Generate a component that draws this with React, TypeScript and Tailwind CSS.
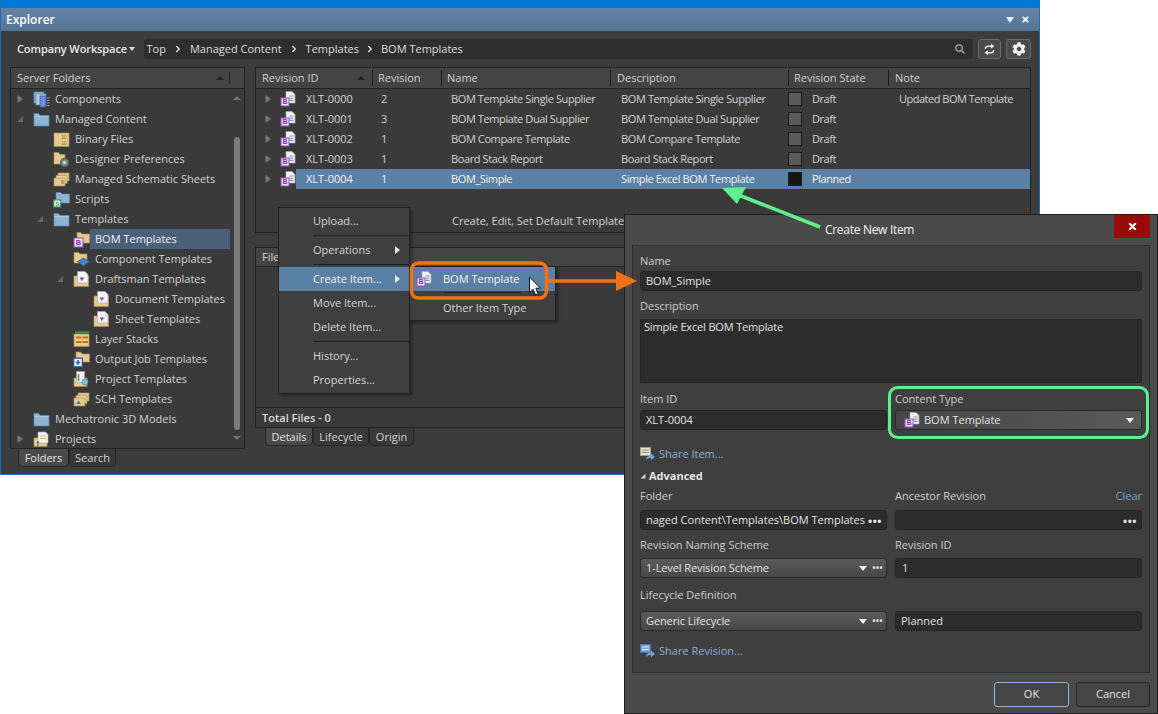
import { ChevronRight } from "lucide-react";
import { FaCog, FaSearch, FaTimes } from "react-icons/fa";

const FONT = "font-['Open_Sans','Liberation_Sans',sans-serif]";

function BomIcon({ className = "" }: { className?: string }) {
  return (
    <svg viewBox="0 0 16 16" className={`h-4 w-4 shrink-0 ${className}`}>
      <path d="M6 .5h6l3 3v8.500H6z" fill="#f2f2f5" stroke="#a8a8b4" strokeWidth=".7" />
      <path d="M9.500 5h4M9.500 7.200h4M9.500 9.400h4" stroke="#8a90a4" strokeWidth="1.100" />
      <rect x="1" y="7" width="8" height="8" fill="#efe6f7" stroke="#8f4fb8" strokeWidth="1" />
      <text x="5" y="13.400" textAnchor="middle" fontSize="7" fontWeight="700" fill="#7b2fa8" fontFamily="Liberation Sans">
        B
      </text>
    </svg>
  );
}

function FolderShape({ kind }: { kind: "blue" | "yellow" }) {
  const body = kind === "blue" ? "#8db4d4" : "#e5cc8e";
  const tab = kind === "blue" ? "#a9cbe4" : "#f1dfae";
  const line = kind === "blue" ? "#5d88ab" : "#a98f55";
  return (
    <>
      <path d="M1 2.500V15h15V4.500H7L5.500 2.500z" fill={body} stroke={line} strokeWidth=".7" />
      <path d="M1.500 5.500h14" stroke={tab} strokeWidth="1.200" />
    </>
  );
}

function TreeIcon({ name }: { name: string }) {
  const cls = "h-[17px] w-[17px] shrink-0";
  switch (name) {
    case "components":
      return (
        <svg viewBox="0 0 17 17" className={cls}>
          <path d="M1 1h10v11H1z" fill="#8db4d4" stroke="#5d88ab" strokeWidth=".7" />
          <path d="M3 3h10v11H3z" fill="#a9cbe4" stroke="#5d88ab" strokeWidth=".7" />
          <rect x="7" y="5" width="6" height="11" fill="#6d8fe0" stroke="#3553a8" strokeWidth=".7" />
          <path d="M14 7h2.500M14 9.500h2.500M14 12h2.500M14 14.500h2.500" stroke="#a9b9d0" strokeWidth=".8" />
        </svg>
      );
    case "blue":
      return (
        <svg viewBox="0 0 17 17" className={cls}>
          <FolderShape kind="blue" />
        </svg>
      );
    case "binary":
      return (
        <svg viewBox="0 0 17 17" className={cls}>
          <path d="M1 2h15v13.500H1z" fill="#e5cc8e" stroke="#a98f55" strokeWidth=".7" />
          <text x="11" y="8" textAnchor="middle" fontSize="5" fill="#8b6a2c" fontFamily="Liberation Sans">10</text>
          <text x="11" y="13.500" textAnchor="middle" fontSize="5" fill="#8b6a2c" fontFamily="Liberation Sans">10</text>
        </svg>
      );
    case "prefs":
      return (
        <svg viewBox="0 0 17 17" className={cls}>
          <path d="M1 1.500V13h11V3.500H7L5.500 1.500z" fill="#e5cc8e" stroke="#a98f55" strokeWidth=".7" />
          <circle cx="11.500" cy="11.500" r="4" fill="#7e878d" stroke="#59636a" strokeWidth="1.300" />
          <circle cx="11.500" cy="11.500" r="1.600" fill="#cfd6da" />
        </svg>
      );
    case "sheets":
      return (
        <svg viewBox="0 0 17 17" className={cls}>
          <path d="M5 2h11v8H5z" fill="#e5cc8e" stroke="#a98f55" strokeWidth=".7" />
          <path d="M3 4.500h11v8H3z" fill="#ead59e" stroke="#a98f55" strokeWidth=".7" />
          <path d="M1 7h11v8H1z" fill="#e5cc8e" stroke="#a98f55" strokeWidth=".7" />
          <path d="M8 10h3M8 12h3" stroke="#8b6a2c" strokeWidth=".8" />
        </svg>
      );
    case "scripts":
      return (
        <svg viewBox="0 0 17 17" className={cls}>
          <path d="M3 1.500V12h13.500V3H9L7.500 1.500z" fill="#8db4d4" stroke="#5d88ab" strokeWidth=".7" />
          <rect x=".7" y="9" width="7" height="7" fill="#f2f7f2" stroke="#2e8b57" strokeWidth="1.100" />
          <text x="4.200" y="14.700" textAnchor="middle" fontSize="6" fontWeight="700" fill="#2e8b57" fontFamily="Liberation Sans">S</text>
        </svg>
      );
    case "bom":
      return (
        <svg viewBox="0 0 17 17" className={cls}>
          <path d="M4 1.500V12h12.500V3H9L7.500 1.500z" fill="#e5cc8e" stroke="#a98f55" strokeWidth=".7" />
          <rect x="1" y="7" width="9" height="9" fill="#efe6f7" stroke="#8f4fb8" strokeWidth="1.100" />
          <text x="5.500" y="14.300" textAnchor="middle" fontSize="7.500" fontWeight="700" fill="#7b2fa8" fontFamily="Liberation Sans">B</text>
        </svg>
      );
    case "component":
      return (
        <svg viewBox="0 0 17 17" className={cls}>
          <path d="M1 1.500V12h13V3H7L5.500 1.500z" fill="#e5cc8e" stroke="#a98f55" strokeWidth=".7" />
          <path d="M10.500 7l6 3.500-6 4.500-6-4.500z" fill="#4f7fc4" stroke="#2d5493" strokeWidth=".7" />
        </svg>
      );
    case "draftsman":
      return (
        <svg viewBox="0 0 17 17" className={cls}>
          <path d="M1 5v10.500h14.500V5z" fill="#e5cc8e" stroke="#a98f55" strokeWidth=".7" />
          <path d="M4.500 .5H12l3 3V12H4.500z" fill="#f4f4f8" stroke="#a8a8b8" strokeWidth=".7" />
          <path d="M6.500 6.500h5l-2 2-.5 2-1-2z" fill="#7a3fb0" />
        </svg>
      );
    case "layers":
      return (
        <svg viewBox="0 0 17 17" className={cls}>
          <rect x="1" y="3" width="15" height="12.500" fill="#e5cc8e" stroke="#a98f55" strokeWidth=".7" />
          <path d="M2 1.500h14" stroke="#2f9a48" strokeWidth="2" />
          <path d="M3 6.500h5.500M9.500 6.500H15M3 11h5.500M9.500 11H15" stroke="#c96f1e" strokeWidth="2" />
        </svg>
      );
    case "output":
      return (
        <svg viewBox="0 0 17 17" className={cls}>
          <path d="M3 1V11h13.500V3H9L7.500 1z" fill="#e5cc8e" stroke="#a98f55" strokeWidth=".7" />
          <rect x=".7" y="7.200" width="8.600" height="8.600" fill="#f2f6fc" stroke="#25589f" strokeWidth="1.300" />
          <path d="M5 9v5M2.700 11.500h4.600" stroke="#25589f" strokeWidth="1.400" />
        </svg>
      );
    case "project":
      return (
        <svg viewBox="0 0 17 17" className={cls}>
          <path d="M1 7v8.500h13V7z" fill="#e5cc8e" stroke="#a98f55" strokeWidth=".7" />
          <path d="M3.500 .5h8v11h-8z" fill="#f2f2f6" stroke="#a0a0b0" strokeWidth=".7" />
          <path d="M5.500 3v7" stroke="#5a8f4f" strokeWidth="1.600" />
          <circle cx="12" cy="11" r="3" fill="#7fc7d8" stroke="#3f8ea0" strokeWidth=".8" />
        </svg>
      );
    case "sch":
      return (
        <svg viewBox="0 0 17 17" className={cls}>
          <path d="M5 2h11v8H5z" fill="#e5cc8e" stroke="#a98f55" strokeWidth=".7" />
          <path d="M3 4.500h11v8H3z" fill="#ead59e" stroke="#a98f55" strokeWidth=".7" />
          <path d="M1 7h11v8H1z" fill="#e5cc8e" stroke="#a98f55" strokeWidth=".7" />
          <path d="M3 13l2.500-3.500L8 13z" fill="#5a74c0" />
        </svg>
      );
    default:
      return (
        <svg viewBox="0 0 17 17" className={cls}>
          <path d="M1 7v8.500h13V7z" fill="#e5cc8e" stroke="#a98f55" strokeWidth=".7" />
          <path d="M5 1h7.500L15 3.500V12H5z" fill="#f4f4f8" stroke="#a8a8b8" strokeWidth=".7" />
          <path d="M7 5h6M7 7.500h6" stroke="#e0a92e" strokeWidth="1.200" />
          <text x="3.500" y="14.500" fontSize="7" fontWeight="700" fill="#3a62b0" fontFamily="Liberation Sans">f</text>
        </svg>
      );
  }
}

const tree = [
  { label: "Components", level: 0, arrow: "right", icon: "components" },
  { label: "Managed Content", level: 0, arrow: "down", icon: "blue" },
  { label: "Binary Files", level: 1, arrow: "", icon: "binary" },
  { label: "Designer Preferences", level: 1, arrow: "", icon: "prefs" },
  { label: "Managed Schematic Sheets", level: 1, arrow: "", icon: "sheets" },
  { label: "Scripts", level: 1, arrow: "", icon: "scripts" },
  { label: "Templates", level: 1, arrow: "down", icon: "blue" },
  { label: "BOM Templates", level: 2, arrow: "", icon: "bom", selected: true },
  { label: "Component Templates", level: 2, arrow: "", icon: "component" },
  { label: "Draftsman Templates", level: 2, arrow: "down", icon: "draftsman" },
  { label: "Document Templates", level: 3, arrow: "", icon: "draftsman" },
  { label: "Sheet Templates", level: 3, arrow: "", icon: "draftsman" },
  { label: "Layer Stacks", level: 2, arrow: "", icon: "layers" },
  { label: "Output Job Templates", level: 2, arrow: "", icon: "output" },
  { label: "Project Templates", level: 2, arrow: "", icon: "project" },
  { label: "SCH Templates", level: 2, arrow: "", icon: "sch" },
  { label: "Mechatronic 3D Models", level: 0, arrow: "", icon: "blue" },
  { label: "Projects", level: 0, arrow: "right", icon: "projects" },
];

const revisions = [
  { id: "XLT-0000", rev: "2", name: "BOM Template Single Supplier", desc: "BOM Template Single Supplier", state: "Draft", note: "Updated BOM Template" },
  { id: "XLT-0001", rev: "3", name: "BOM Template Dual Supplier", desc: "BOM Template Dual Supplier", state: "Draft", note: "" },
  { id: "XLT-0002", rev: "1", name: "BOM Compare Template", desc: "BOM Compare Template", state: "Draft", note: "" },
  { id: "XLT-0003", rev: "1", name: "Board Stack Report", desc: "Board Stack Report", state: "Draft", note: "" },
  { id: "XLT-0004", rev: "1", name: "BOM_Simple", desc: "Simple Excel BOM Template", state: "Planned", note: "", selected: true },
];

function Arrow({ dir }: { dir: string }) {
  if (dir === "right") {
    return (
      <svg viewBox="0 0 8 8" className="h-2 w-2">
        <path d="M1.500 0v8L7 4z" fill="#777" />
      </svg>
    );
  }
  if (dir === "down") {
    return (
      <svg viewBox="0 0 8 8" className="h-2 w-2">
        <path d="M7 1v6H1z" fill="#666" />
      </svg>
    );
  }
  return null;
}

function Tab({ label, active, className = "" }: { label: string; active?: boolean; className?: string }) {
  return (
    <div
      className={`flex h-[18px] items-center rounded-b-[5px] border border-t-0 border-[#262626] pt-px ${
        active ? "bg-[#4a4a4a] text-[#e4e4e4]" : "bg-[#383838] text-[#d4d4d4]"
      } ${className}`}
    >
      {label}
    </div>
  );
}

function Explorer() {
  return (
    <div className="flex h-[475px] w-[1040px] flex-col border-x border-b border-[#1f6fb5] bg-[#3c3c3c]">
      <div className="h-2 shrink-0 bg-[#0078d7]" />
      <div className="flex h-[23px] shrink-0 items-center justify-between bg-gradient-to-b from-[#6383a6] to-[#567594] pl-[5px] pr-[9px]">
        <span className="text-[12px] font-semibold text-white">Explorer</span>
        <div className="flex items-center gap-[7px] text-white">
          <svg viewBox="0 0 8 6" className="h-[6px] w-2">
            <path d="M0 0h8L4 6z" fill="#e8eef5" />
          </svg>
          <FaTimes className="text-[9px]" />
        </div>
      </div>
      <div className="flex h-9 shrink-0 items-center pl-4 pr-[8px]">
        <span className="w-[111px] whitespace-nowrap text-[11px] font-semibold tracking-[-0.1px] text-[#e8e8e8]">Company Workspace</span>
        <svg viewBox="0 0 6 4" className="ml-[1px] h-1 w-[6px]">
          <path d="M0 0h6L3 4z" fill="#ddd" />
        </svg>
        <div className="ml-[9px] flex h-5 w-[833px] items-center rounded-[3px] bg-[#2e2e2e] pl-[3px] pr-2 text-[11px] text-[#dedede]">
          <span>Top</span>
          <ChevronRight size={10} strokeWidth={3.500} className="mx-[7px]" />
          <span>Managed Content</span>
          <ChevronRight size={10} strokeWidth={3.500} className="mx-[7px]" />
          <span>Templates</span>
          <ChevronRight size={10} strokeWidth={3.500} className="mx-[6px]" />
          <span>BOM Templates</span>
          <FaSearch className="ml-auto text-[10px] text-[#999]" />
        </div>
        <button className="ml-[5px] flex h-5 w-[23px] items-center justify-center rounded-[3px] border border-[#6a6a6a] bg-[#4a4a4a]">
          <svg viewBox="0 0 14 14" className="h-[13px] w-[13px]" fill="none" stroke="#e8e8e8" strokeWidth="1.600">
            <path d="M2.500 6.500C2.500 4.500 4 3.500 5.500 3.500H9" />
            <path d="M8.500 .8L12.500 3.500 8.500 6.200z" fill="#e8e8e8" stroke="none" />
            <path d="M11.500 7.500C11.500 9.500 10 10.500 8.500 10.500H5" />
            <path d="M5.500 7.800L1.500 10.500 5.500 13.200z" fill="#e8e8e8" stroke="none" />
          </svg>
        </button>
        <button className="ml-[5px] flex h-5 w-[25px] items-center justify-center rounded-[3px] border border-[#6a6a6a] bg-[#4a4a4a]">
          <FaCog className="text-[14px] text-[#f0f0f0]" />
        </button>
      </div>
      <div className="flex min-h-0 flex-1 gap-[10px] pl-[9px]">
        <div className="flex w-[235px] shrink-0 flex-col">
          <div className="flex h-[382px] flex-col border border-[#222] bg-[#3a3a3a]">
            <div className="flex h-[21px] shrink-0 items-center border-b border-[#222] bg-[#444] pl-[6px] text-[11px] text-[#cfcfcf]">
              <span className="flex-1">Server Folders</span>
              <svg viewBox="0 0 8 4" className="mr-[5px] h-1 w-2">
                <path d="M0 4h8L4 0z" fill="#222" />
              </svg>
              <span className="h-3 w-px bg-[#1d1d1d]" />
              <span className="w-[14px]" />
            </div>
            <div className="flex min-h-0 flex-1">
              <div className="flex-1">
                {tree.map((n) => (
                  <div key={n.label} className="flex h-5 items-center" style={{ paddingLeft: 5 + n.level * 20 }}>
                    <span className="flex w-[17px] shrink-0 items-center">
                      <Arrow dir={n.arrow} />
                    </span>
                    <TreeIcon name={n.icon} />
                    <span
                      className={`flex h-5 flex-1 items-center pl-[5px] text-[11px] ${
                        n.selected ? "bg-[#4b6078] text-[#f0f0f0]" : "text-[#d2d2d2]"
                      }`}
                    >
                      {n.label}
                    </span>
                  </div>
                ))}
              </div>
              <div className="flex w-[14px] shrink-0 flex-col items-center">
                <svg viewBox="0 0 8 4" className="mt-[7px] h-1 w-2">
                  <path d="M0 4h8L4 0z" fill="#6f6f6f" />
                </svg>
                <div className="mt-[37px] h-[293px] w-[6px] rounded-[3px] bg-[#7b7b7b]" />
                <svg viewBox="0 0 8 4" className="mt-[6px] h-1 w-2">
                  <path d="M0 0h8L4 4z" fill="#6f6f6f" />
                </svg>
              </div>
            </div>
          </div>
          <div className="flex pl-[8px] text-[11px]">
            <Tab label="Folders" active className="w-[51px] justify-center" />
            <Tab label="Search" className="w-[47px] justify-center" />
          </div>
        </div>
        <div className="flex w-[776px] shrink-0 flex-col">
          <div className="h-[166px] shrink-0 border border-[#222] bg-[#3a3a3a]">
            <div className="grid h-[21px] grid-cols-[116px_69px_169px_178px_100px_1fr] items-center border-b border-[#222] bg-[#444] text-[11px] text-[#cfcfcf]">
              <div className="flex items-center pl-[6px] pr-[7px]">
                <span className="flex-1">Revision ID</span>
                <svg viewBox="0 0 8 4" className="h-1 w-2">
                  <path d="M0 4h8L4 0z" fill="#222" />
                </svg>
              </div>
              <div className="border-l border-[#1d1d1d] pl-[5px]">Revision</div>
              <div className="border-l border-[#1d1d1d] pl-[5px]">Name</div>
              <div className="border-l border-[#1d1d1d] pl-[6px]">Description</div>
              <div className="border-l border-[#1d1d1d] pl-[5px]">Revision State</div>
              <div className="border-l border-[#1d1d1d] pl-[6px]">Note</div>
            </div>
            {revisions.map((r) => (
              <div key={r.id} className="flex h-5 items-center text-[11px] text-[#d2d2d2]">
                <span className="flex w-[24px] shrink-0 justify-end pr-[8px]">
                  <Arrow dir="right" />
                </span>
                <BomIcon />
                <div
                  className={`grid h-5 flex-1 grid-cols-[76px_69px_169px_178px_100px_1fr] items-center ${
                    r.selected ? "bg-[#5b80a6] text-[#f2f2f2]" : ""
                  }`}
                >
                  <span className="pl-[10px]">{r.id}</span>
                  <span className="pl-[9px]">{r.rev}</span>
                  <span className="pl-[10px] tracking-[-0.39px]">{r.name}</span>
                  <span className="pl-[11px] tracking-[-0.38px]">{r.desc}</span>
                  <span className="flex items-center tracking-[-0.45px]">
                    <span
                      className={`mr-[10px] h-[14px] w-[14px] border border-[#1c1c1c] ${
                        r.state === "Draft" ? "bg-[#5a5a5a]" : "bg-[#151515]"
                      }`}
                    />
                    {r.state}
                  </span>
                  <span className="pl-[11px] tracking-[-0.5px]">{r.note}</span>
                </div>
              </div>
            ))}
            <div className="mt-[24px] pl-[196px] text-[11px] leading-4 text-[#d2d2d2]">Create, Edit, Set Default Template</div>
          </div>
          <div className="mt-[14px] flex h-[181px] shrink-0 flex-col border border-[#222] bg-[#3a3a3a]">
            <div className="flex h-[19px] shrink-0 items-center border-b border-[#222] bg-[#444] pl-[6px] text-[11px] text-[#cfcfcf]">
              File
            </div>
            <div className="flex-1" />
            <div className="flex h-5 shrink-0 items-center border-t border-[#222] pl-[6px] pt-px text-[11px] font-semibold text-[#dcdcdc]">
              Total Files - 0
            </div>
          </div>
          <div className="flex pl-[10px] text-[11px]">
            <Tab label="Details" active className="w-[48px] justify-center" />
            <Tab label="Lifecycle" className="w-[56px] justify-center" />
            <Tab label="Origin" className="w-[45px] justify-center" />
          </div>
        </div>
      </div>
    </div>
  );
}

function MenuRow({ label, arrow, active }: { label: string; arrow?: boolean; active?: boolean }) {
  return (
    <div
      className={`flex h-6 items-center justify-between pl-[34px] pr-[9px] text-[11px] ${
        active ? "bg-[#5b80a6] text-[#f2f2f2]" : "text-[#d4d4d4]"
      }`}
    >
      {label}
      {arrow && (
        <svg viewBox="0 0 5 8" className="h-2 w-[5px]">
          <path d="M0 0v8l5-4z" fill="#e8e8e8" />
        </svg>
      )}
    </div>
  );
}

function MenuSep() {
  return <div className="my-[2px] ml-[34px] h-px bg-[#222]" />;
}

function ContextMenu() {
  return (
    <>
      <div className="absolute left-[278px] top-[207px] w-[132px] border border-[#222] bg-[#3f3f3f] py-px shadow-[2px_2px_3px_rgba(0,0,0,0.35)]">
        <MenuRow label="Upload..." />
        <MenuSep />
        <MenuRow label="Operations" arrow />
        <MenuSep />
        <MenuRow label="Create Item..." arrow active />
        <MenuRow label="Move Item..." />
        <MenuRow label="Delete Item..." />
        <MenuSep />
        <MenuRow label="History..." />
        <MenuRow label="Properties..." />
      </div>
      <div className="absolute left-[409px] top-[266px] w-[147px] border border-[#222] bg-[#3f3f3f] shadow-[2px_2px_3px_rgba(0,0,0,0.35)]">
        <div className="flex h-6 items-center bg-[#5b80a6] pl-[6px] text-[11px] text-[#f2f2f2]">
          <BomIcon />
          <span className="ml-[11px]">BOM Template</span>
        </div>
        <div className="mx-[34px] mt-px h-px bg-[#222]" />
        <div className="flex h-[27px] items-center pl-[33px] pt-[3px] text-[11px] text-[#d4d4d4]">Other Item Type</div>
      </div>
    </>
  );
}

function Label({ children, className = "" }: { children: React.ReactNode; className?: string }) {
  return <div className={`text-[11px] leading-[14px] text-[#cdcdcd] ${className}`}>{children}</div>;
}

function Input({ children, className = "" }: { children?: React.ReactNode; className?: string }) {
  return (
    <div className={`flex h-5 items-center rounded-[3px] border border-[#262626] bg-[#2c2c2c] pl-[5px] pr-[4px] text-[11px] text-[#e2e2e2] ${className}`}>
      {children}
    </div>
  );
}

function Dots() {
  return <span className="ml-auto text-[11px] font-bold leading-none tracking-[0.5px] text-[#e8e8e8]">•••</span>;
}

function Caret() {
  return (
    <svg viewBox="0 0 8 5" className="h-[5px] w-2">
      <path d="M0 0h8L4 5z" fill="#efefef" />
    </svg>
  );
}

function Select({ label }: { label: string }) {
  return (
    <div className="flex h-5 w-[247px] items-center rounded-[3px] border border-[#2a2a2a] bg-gradient-to-b from-[#5b5b5b] to-[#474747] pl-[5px] pr-[3px] text-[11px] tracking-[-0.1px] text-[#e2e2e2]">
      {label}
      <span className="ml-auto mr-[5px]">
        <Caret />
      </span>
      <span className="text-[8px] font-bold tracking-[0.5px] text-[#e8e8e8]">•••</span>
    </div>
  );
}

function ShareIcon({ blue }: { blue?: boolean }) {
  return (
    <svg viewBox="0 0 16 14" className="h-[14px] w-4 shrink-0">
      <rect x=".5" y=".5" width="10" height="8" fill={blue ? "#7d9fd6" : "#efe6c9"} stroke={blue ? "#4d72b0" : "#b89a5a"} />
      <path d="M2 3h7M2 5.500h7" stroke={blue ? "#e5edf8" : "#6d8fc0"} strokeWidth="1" />
      <path d="M6 13c0-3 2-4.500 5-4.500V6.500l4 3.500-4 3v-2c-2 0-3.500.5-5 2z" fill="#6ea2dd" />
    </svg>
  );
}

function Dialog() {
  return (
    <div className="absolute left-[624px] top-[214px] flex h-[500px] w-[534px] flex-col border border-[#1e1e1e] bg-[#4a4a4a] px-[7px]">
      <div className="flex h-[30px] shrink-0 justify-end">
        <button className="flex h-[23px] w-9 items-center justify-center bg-[#990a0a] text-white">
          <FaTimes className="text-[11px]" />
        </button>
      </div>
      <div className="h-[428px] shrink-0 border border-[#2e2e2e] bg-[#3f3f3f] px-[7px] pt-[8px]">
        <Label>Name</Label>
        <Input className="mt-[3px] w-[502px]">BOM_Simple</Input>
        <Label className="mt-[8px]">Description</Label>
        <div className="mt-[6px] h-[64px] w-[502px] border border-[#262626] bg-[#2c2c2c] pl-[3px] text-[11px] leading-[14px] tracking-[-0.16px] text-[#e2e2e2]">
          Simple Excel BOM Template
        </div>
        <div className="mt-[9px] flex gap-[8px]">
          <div className="w-[247px]">
            <Label>Item ID</Label>
            <Input className="mt-[4px] w-[247px]">XLT-0004</Input>
          </div>
          <div className="w-[247px]">
            <Label>Content Type</Label>
            <div className="mt-[4px] flex h-5 items-center rounded-[3px] border border-[#2a2a2a] bg-gradient-to-r from-[#464646] to-[#5a5a5a] pl-2 pr-[7px] text-[11px] text-[#e2e2e2]">
              <BomIcon />
              <span className="ml-[4px] pt-px">BOM Template</span>
              <span className="ml-auto">
                <Caret />
              </span>
            </div>
          </div>
        </div>
        <div className="mt-[16px] flex h-4 items-center text-[11px] text-[#88aed8]">
          <ShareIcon />
          <span className="ml-[3px]">Share Item...</span>
        </div>
        <div className="mt-[6px] flex h-4 items-center text-[11px] font-bold text-[#e4e4e4]">
          <svg viewBox="0 0 6 6" className="mr-[3px] h-[6px] w-[6px]">
            <path d="M5.500.5v5h-5z" fill="#ccc" />
          </svg>
          Advanced
        </div>
        <div className="mt-[5px] flex gap-[8px]">
          <div className="w-[247px]">
            <Label>Folder</Label>
            <Input className="mt-[7px]">
              naged Content\Templates\BOM Templates
              <Dots />
            </Input>
          </div>
          <div className="w-[247px]">
            <div className="flex justify-between">
              <Label>Ancestor Revision</Label>
              <span className="text-[11px] leading-[14px] text-[#6fa0d0]">Clear</span>
            </div>
            <Input className="mt-[7px]">
              <Dots />
            </Input>
          </div>
        </div>
        <div className="mt-[8px] flex gap-[8px]">
          <div className="w-[247px]">
            <Label>Revision Naming Scheme</Label>
            <div className="mt-[6px]">
              <Select label="1-Level Revision Scheme" />
            </div>
          </div>
          <div className="w-[247px]">
            <Label>Revision ID</Label>
            <Input className="mt-[6px] !pl-[6px]">1</Input>
          </div>
        </div>
        <Label className="mt-[10px]">Lifecycle Definition</Label>
        <div className="mt-[9px] flex gap-[8px]">
          <Select label="Generic Lifecycle" />
          <Input className="w-[247px]">Planned</Input>
        </div>
        <div className="mt-[12px] flex h-4 items-center text-[11px] text-[#88aed8]">
          <ShareIcon blue />
          <span className="ml-[3px]">Share Revision...</span>
        </div>
      </div>
      <div className="flex flex-1 items-start justify-end gap-[7px] pt-[9px]">
        <button className="h-[25px] w-[75px] rounded-[3px] border border-[#8fb2d0] bg-[#454545] text-[11px] text-[#e4e4e4]">OK</button>
        <button className="h-[25px] w-[74px] rounded-[3px] border border-[#262626] bg-[#454545] text-[11px] text-[#e4e4e4]">Cancel</button>
      </div>
    </div>
  );
}

function Annotations() {
  return (
    <>
      <svg viewBox="0 0 1158 714" className="pointer-events-none absolute left-0 top-0 h-[714px] w-[1158px]">
        <path d="M820 227L736 194" stroke="#5df08c" strokeWidth="3.500" fill="none" />
        <path d="M722 188L746 187L737 204z" fill="#5df08c" />
        <path d="M548 281H618" stroke="#f47216" strokeWidth="3.500" fill="none" />
        <path d="M616 271L637 281L616 291z" fill="#f47216" />
        <rect x="411.500" y="263" width="135" height="35" rx="7" fill="none" stroke="#f47216" strokeWidth="3.500" />
        <rect x="889.500" y="387.500" width="258" height="50" rx="8" fill="none" stroke="#5df08c" strokeWidth="3" />
        <path d="M529.500 277v15.500l3.700-3.200 2.400 5.700 2.600-1.100-2.400-5.700h4.700z" fill="#fff" stroke="#111" strokeWidth="1" />
      </svg>
      <div className="absolute left-[825px] top-[222px] text-[12px] leading-4 tracking-[-0.3px] text-[#f2f2f2]">Create New Item</div>
    </>
  );
}

export default function App() {
  return (
    <div className={`relative h-[714px] w-[1158px] overflow-hidden bg-white ${FONT}`}>
      <Explorer />
      <ContextMenu />
      <Dialog />
      <Annotations />
    </div>
  );
}
